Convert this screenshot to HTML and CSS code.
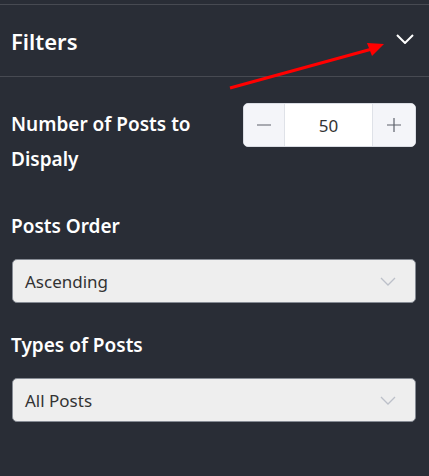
FILE: index.html
```html
<!DOCTYPE html>
<html lang="en">
<head>
    <meta charset="UTF-8">
    <meta name="viewport" content="width=device-width, initial-scale=1.0">
    <title>Filters</title>
    <link rel="stylesheet" href="styles.css">
</head>
<body>

    <div class="sidebar">
        <!-- Collapsible header -->
        <div class="filters-header">
            <h2>Filters</h2>
            <svg class="toggle-icon" width="18" height="10" viewBox="0 0 18 10">
                <path d="M1 1 L9 9 L17 1" fill="none" stroke="#ffffff" stroke-width="2"/>
            </svg>
        </div>

        <div class="filters-body">
            <div class="filter-row">
                <label class="filter-label">Number of Posts to Dispaly</label>
                <div class="spinner">
                    <button class="spin-btn" aria-label="Decrease">
                        <svg width="14" height="14" viewBox="0 0 14 14">
                            <line x1="0" y1="7" x2="14" y2="7" stroke="#5c616b" stroke-width="1.2"/>
                        </svg>
                    </button>
                    <input type="text" class="spin-input" value="50">
                    <button class="spin-btn" aria-label="Increase">
                        <svg width="14" height="14" viewBox="0 0 14 14">
                            <line x1="0" y1="7" x2="14" y2="7" stroke="#5c616b" stroke-width="1.2"/>
                            <line x1="7" y1="0" x2="7" y2="14" stroke="#5c616b" stroke-width="1.2"/>
                        </svg>
                    </button>
                </div>
            </div>

            <div class="filter-group">
                <label class="filter-label">Posts Order</label>
                <div class="select-box">
                    <span>Ascending</span>
                    <svg width="16" height="9" viewBox="0 0 16 9">
                        <path d="M1 1 L8 8 L15 1" fill="none" stroke="#bcc0c9" stroke-width="1.3"/>
                    </svg>
                </div>
            </div>

            <div class="filter-group">
                <label class="filter-label">Types of Posts</label>
                <div class="select-box">
                    <span>All Posts</span>
                    <svg width="16" height="9" viewBox="0 0 16 9">
                        <path d="M1 1 L8 8 L15 1" fill="none" stroke="#bcc0c9" stroke-width="1.3"/>
                    </svg>
                </div>
            </div>
        </div>

        <!-- Annotation arrow pointing at the toggle -->
        <svg class="annotation" width="429" height="100" viewBox="0 0 429 100">
            <line x1="230" y1="88" x2="372" y2="49" stroke="#ff0000" stroke-width="3"/>
            <polygon points="384,44 367,43 372,56" fill="#ff0000"/>
        </svg>
    </div>

</body>
</html>
```

FILE: styles.css
```css
body {
    margin: 0;
    background-color: #292d36;
    font-family: "Noto Sans", "Open Sans", sans-serif;
    color: #ffffff;
}

.sidebar {
    position: relative;
    padding-top: 4px;
}

/* Header with title and chevron */
.filters-header {
    display: flex;
    align-items: center;
    justify-content: space-between;
    height: 71px;
    padding: 0 15px 0 11px;
    border-top: 1px solid #474a52;
    border-bottom: 1px solid #474a52;
}

.filters-header h2 {
    margin: 0;
    font-size: 22px;
    font-weight: 600;
}

.toggle-icon {
    margin-top: -4px;
}

.filters-body {
    padding: 26px 13px 0 11px;
}

.filter-label {
    display: block;
    font-size: 19px;
    font-weight: 600;
    line-height: 35px;
}

.filter-row {
    display: flex;
    justify-content: space-between;
    align-items: flex-start;
    margin-bottom: 32px;
}

.filter-row .filter-label {
    width: 210px;
    margin-top: 4px;
}

/* Number spinner */
.spinner {
    display: flex;
    width: 171px;
    height: 42px;
    border: 1px solid #d9dce3;
    border-radius: 5px;
    overflow: hidden;
    background-color: #ffffff;
}

.spin-btn {
    display: flex;
    align-items: center;
    justify-content: center;
    width: 41px;
    border: none;
    background-color: #f4f5f9;
    padding: 0;
}

.spin-btn:first-child {
    border-right: 1px solid #dfe2e8;
}

.spin-btn:last-child {
    width: 43px;
    border-left: 1px solid #dfe2e8;
}

.spin-input {
    flex: 1;
    min-width: 0;
    border: none;
    text-align: center;
    font-family: "Noto Sans", sans-serif;
    font-size: 17px;
    color: #333333;
}

/* Select boxes */
.filter-group {
    margin-bottom: 25px;
}

.filter-group .filter-label {
    margin-bottom: 15px;
}

.select-box {
    display: flex;
    align-items: center;
    justify-content: space-between;
    height: 42px;
    margin-left: 1px;
    padding: 0 19px 0 12px;
    background-color: #eeeeee;
    border: 1px solid #868b94;
    border-radius: 5px;
    color: #333333;
    font-size: 17px;
}

/* Red annotation arrow */
.annotation {
    position: absolute;
    top: 0;
    left: 0;
    pointer-events: none;
}
```
